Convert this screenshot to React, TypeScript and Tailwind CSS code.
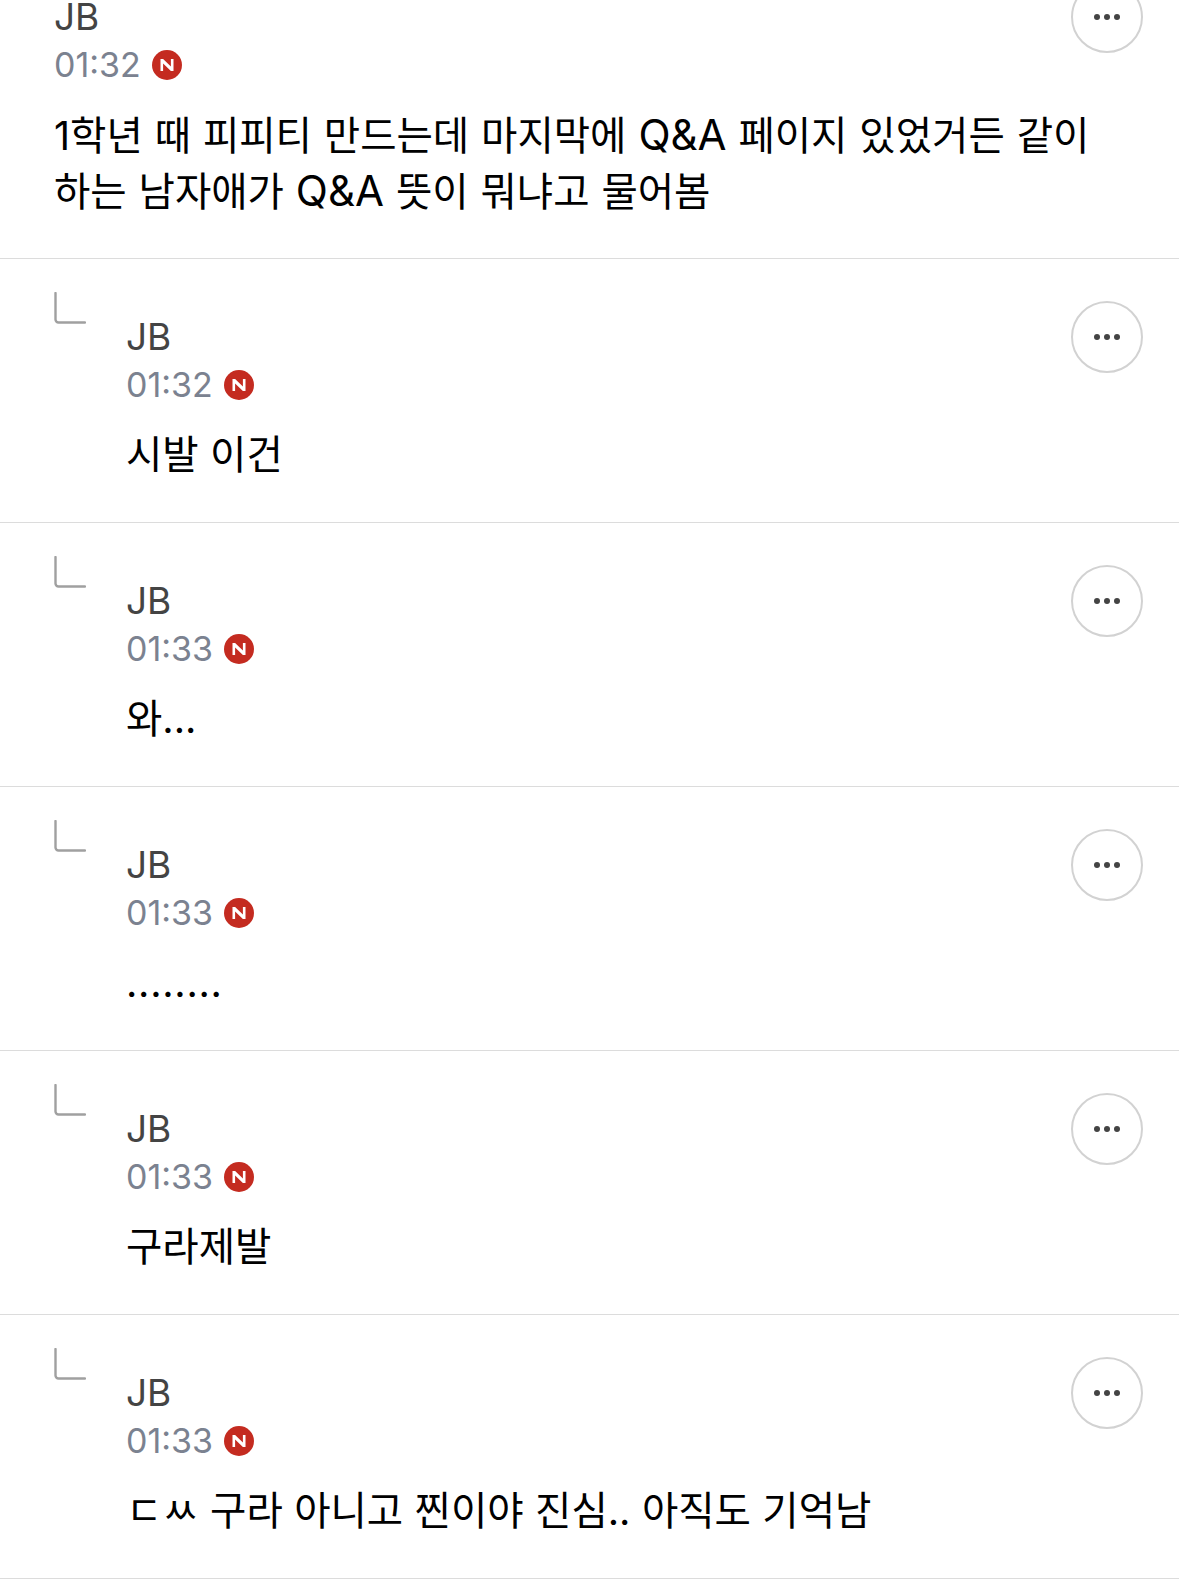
import type { ReactNode } from "react";

const font = { fontFamily: '"Inter", "Noto Sans CJK KR", sans-serif' };

function Badge() {
  return (
    <svg width="30" height="30" viewBox="0 0 30 30" className="shrink-0">
      <circle cx="15" cy="15" r="15" fill="#c42b20" />
      <path d="M8.5 21V9h2.6l7.8 7.4V9h2.6v12h-2.6l-7.8-7.4V21z" fill="#fff" />
    </svg>
  );
}

function More() {
  return (
    <div className="flex h-[72px] w-[72px] shrink-0 items-center justify-center gap-[4px] rounded-full border-2 border-[#d2d2d2] bg-white">
      <span className="h-[6px] w-[6px] rounded-full bg-[#444444]" />
      <span className="h-[6px] w-[6px] rounded-full bg-[#444444]" />
      <span className="h-[6px] w-[6px] rounded-full bg-[#444444]" />
    </div>
  );
}

function Corner() {
  return (
    <svg width="32" height="32" viewBox="0 0 32 32" className="mt-[-9px] shrink-0">
      <path d="M1.5 1v26.5a3 3 0 0 0 3 3H31" fill="none" stroke="#a0a0a0" strokeWidth="2.4" strokeLinecap="round" />
    </svg>
  );
}

function Meta({ time }: { time: string }) {
  return (
    <>
      <div className="h-[50px] text-[37px] leading-[50px] text-[#444444]">JB</div>
      <div className="flex h-[46px] items-center gap-[11px]">
        <span className="text-[34px] leading-[46px] text-[#7b8290]">{time}</span>
        <Badge />
      </div>
    </>
  );
}

function Reply({ time, text }: { time: string; text: ReactNode }) {
  return (
    <div className="flex h-[264px] border-b border-[#dcdcdc] pl-[54px] pr-[36px] pt-[42px]">
      <Corner />
      <div className="ml-[40px] min-w-0 flex-1 pt-[11px]">
        <Meta time={time} />
        <p className="mt-[19px] text-[39.5px] leading-[56px] text-black [word-spacing:0.3px]">{text}</p>
      </div>
      <More />
    </div>
  );
}

function QA() {
  return <span className="text-[42px] leading-[0]">Q&amp;A</span>;
}

export default function App() {
  const replies: [string, ReactNode][] = [
    ["01:32", "시발 이건"],
    ["01:33", "와..."],
    ["01:33", <span className="tracking-[0.7px]">........</span>],
    ["01:33", "구라제발"],
    ["01:33", "ㄷㅆ 구라 아니고 찐이야 진심.. 아직도 기억남"],
  ];
  return (
    <div className="h-[1580px] overflow-hidden bg-white" style={font}>
      <div className="mt-[-8px] flex h-[267px] border-b border-[#dcdcdc] pl-[54px] pr-[36px]">
        <div className="min-w-0 flex-1">
          <Meta time="01:32" />
          <p className="mr-[-72px] mt-[21px] break-keep text-[39.5px] leading-[55.5px] text-black [word-spacing:0.8px]">
            1학년 때 피피티 만드는데 마지막에 <QA /> 페이지 있었거든 같이 하는 남자애가 <QA /> 뜻이 뭐냐고 물어봄
          </p>
        </div>
        <div className="mt-[-11px]">
          <More />
        </div>
      </div>
      {replies.map(([t, x], i) => (
        <Reply key={i} time={t} text={x} />
      ))}
    </div>
  );
}
